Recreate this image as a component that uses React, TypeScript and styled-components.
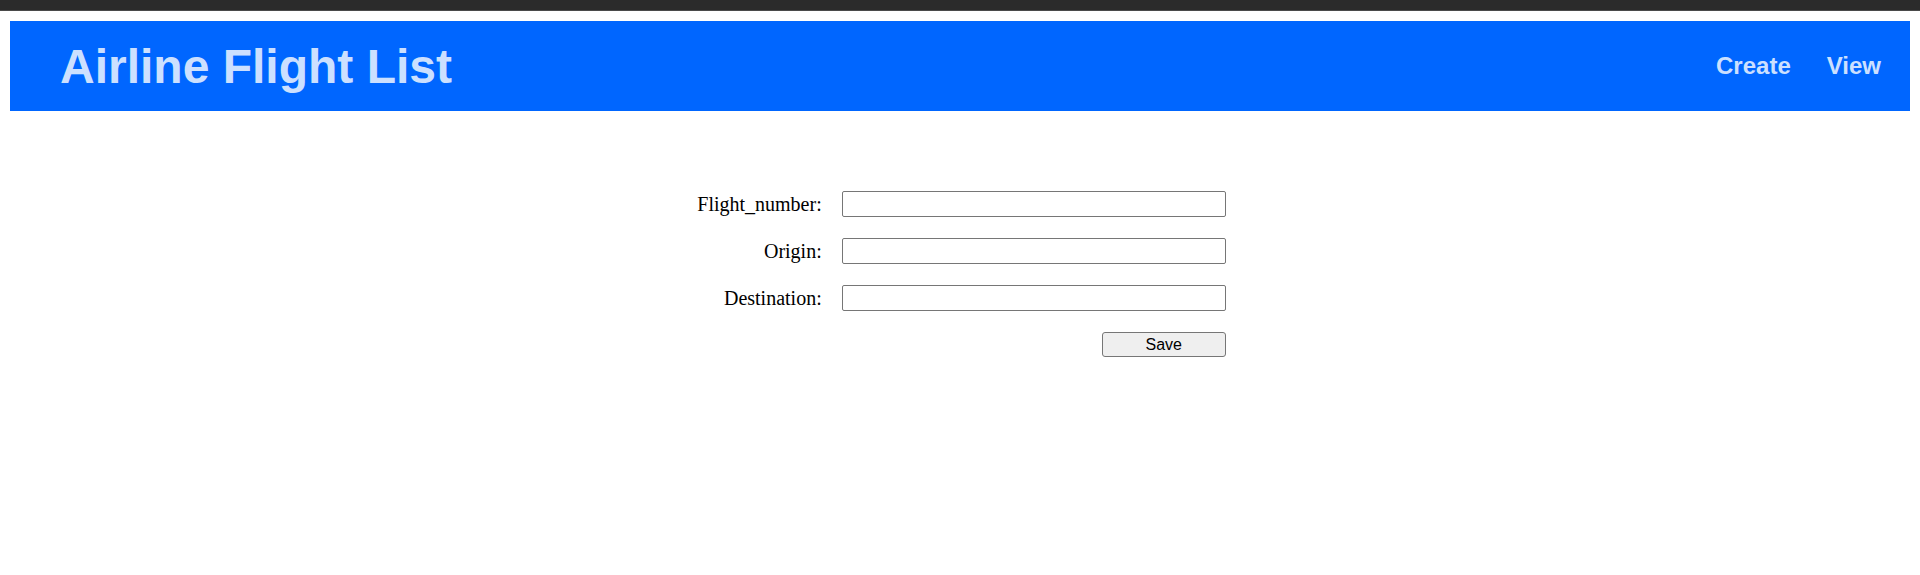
import React, { ReactElement } from 'react';
import styled, { createGlobalStyle } from 'styled-components';

const GlobalStyle = createGlobalStyle`
  html,
  body {
    background: #ffffff;
    margin: 0;
    padding: 0;
  }

  body {
    font-family: "Liberation Serif", "Times New Roman", serif;
  }
`;

const TopStrip = styled.div`
  background: #2b2b2b;
  border-bottom: 1px solid #4a4a4a;
  height: 10px;
`;

const Page = styled.div`
  padding: 10px;
`;

const Header = styled.header`
  align-items: center;
  background: #0066ff;
  box-sizing: border-box;
  display: flex;
  height: 90px;
  justify-content: space-between;
  padding: 0 29px 0 50px;
`;

const Title = styled.h1`
  color: #cce0ff;
  font-family: "Liberation Sans", Arial, sans-serif;
  font-size: 48px;
  font-weight: bold;
  margin: 0;
`;

const Nav = styled.nav`
  display: flex;
  gap: 36px;
`;

const NavLink = styled.a`
  color: #cce0ff;
  cursor: pointer;
  font-family: "Liberation Sans", Arial, sans-serif;
  font-size: 24px;
  font-weight: bold;
  text-decoration: none;
`;

const Form = styled.form`
  align-items: center;
  column-gap: 20px;
  display: grid;
  grid-template-columns: auto 384px;
  justify-content: center;
  margin-top: 80px;
  padding-left: 3px;
  row-gap: 21px;
`;

const Label = styled.label`
  color: #000000;
  font-size: 20px;
  text-align: right;
`;

const Input = styled.input`
  border: 1px solid #767676;
  border-radius: 2px;
  box-sizing: border-box;
  font-size: 16px;
  height: 26px;
  padding: 1px 4px;
  width: 100%;
`;

const SaveButton = styled.button`
  background: #efefef;
  border: 1px solid #767676;
  border-radius: 3px;
  box-sizing: border-box;
  color: #000000;
  font-family: "Liberation Sans", Arial, sans-serif;
  font-size: 16px;
  grid-column: 2;
  height: 25px;
  justify-self: end;
  padding: 0;
  width: 124px;
`;

const fields: string[] = ['Flight_number', 'Origin', 'Destination'];

export default function App(): ReactElement {
  return (
    <>
      <GlobalStyle />
      <TopStrip />
      <Page>
        <Header>
          <Title>Airline Flight List</Title>
          <Nav>
            <NavLink>Create</NavLink>
            <NavLink>View</NavLink>
          </Nav>
        </Header>
        <Form onSubmit={(e) => e.preventDefault()}>
          {fields.map(
            (field: string): ReactElement => (
              <React.Fragment key={field}>
                <Label htmlFor={field}>{field}:</Label>
                <Input id={field} type="text" />
              </React.Fragment>
            ),
          )}
          <SaveButton type="submit">Save</SaveButton>
        </Form>
      </Page>
    </>
  );
}
